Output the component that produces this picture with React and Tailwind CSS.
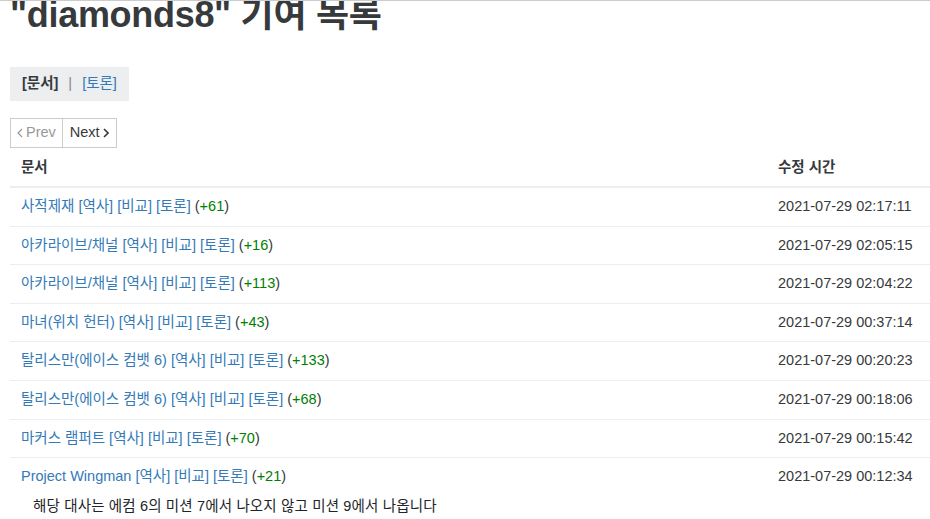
import React from 'react';

const rows = [
  { title: '사적제재', diff: '+61', time: '2021-07-29 02:17:11' },
  { title: '아카라이브/채널', diff: '+16', time: '2021-07-29 02:05:15' },
  { title: '아카라이브/채널', diff: '+113', time: '2021-07-29 02:04:22' },
  { title: '마녀(위치 헌터)', diff: '+43', time: '2021-07-29 00:37:14' },
  { title: '탈리스만(에이스 컴뱃 6)', diff: '+133', time: '2021-07-29 00:20:23' },
  { title: '탈리스만(에이스 컴뱃 6)', diff: '+68', time: '2021-07-29 00:18:06' },
  { title: '마커스 램퍼트', diff: '+70', time: '2021-07-29 00:15:42' },
  {
    title: 'Project Wingman',
    diff: '+21',
    time: '2021-07-29 00:12:34',
    log: '해당 대사는 에컴 6의 미션 7에서 나오지 않고 미션 9에서 나옵니다',
  },
];

const font = { fontFamily: '"Liberation Sans", "Noto Sans CJK KR", Arial, sans-serif' };

const App = () => {
  return (
    <div className="min-h-[519px] bg-white border-t border-[#cccccc] pl-[10px] text-[#373a3c] overflow-hidden" style={font}>
      <h1 className="mt-[-4px] text-[36px] leading-none font-bold text-[#373a3c] tracking-[-0.3px]">
        "diamonds8" 기여 목록
      </h1>

      <div className="mt-[34px] inline-flex items-center h-[34px] px-3 bg-[#eceeef] text-[14.5px]">
        <span className="font-bold">[문서]</span>
        <span className="mx-[10px] text-[#888]">|</span>
        <a className="text-[#337ab7]">[토론]</a>
      </div>

      <div className="mt-[17px] flex text-[14.5px]">
        <span className="flex items-center gap-[3px] h-[30px] px-[6px] border border-[#cccccc] text-[#999]">
          <svg width="6" height="10" viewBox="0 0 6 10" fill="none" stroke="currentColor" strokeWidth="1.2">
            <path d="M5 1 L1 5 L5 9" />
          </svg>
          Prev
        </span>
        <span className="flex items-center gap-[3px] h-[30px] px-[7px] border border-l-0 border-[#cccccc] text-[#373a3c]">
          Next
          <svg width="6" height="10" viewBox="0 0 6 10" fill="none" stroke="currentColor" strokeWidth="1.6">
            <path d="M1 1 L5 5 L1 9" />
          </svg>
        </span>
      </div>

      <table className="w-full border-collapse text-[14.5px]">
        <thead>
          <tr className="border-b-2 border-[#eceeef]">
            <th className="text-left font-bold px-[11px] py-[9px] leading-[20px]">문서</th>
            <th className="text-left font-bold px-3 py-[9px] leading-[20px] w-[164px]">수정 시간</th>
          </tr>
        </thead>
        <tbody>
          {rows.map((r, i) => (
            <React.Fragment key={i}>
              <tr className={r.log ? '' : 'border-b border-[#eceeef]'}>
                <td className="px-[11px] py-[9px] leading-[19.6px]">
                  <a className="text-[#337ab7]">{r.title}</a>{' '}
                  <a className="text-[#337ab7]">[역사]</a>{' '}
                  <a className="text-[#337ab7]">[비교]</a>{' '}
                  <a className="text-[#337ab7]">[토론]</a>{' '}
                  <span>
                    (<span className="text-[#008000]">{r.diff}</span>)
                  </span>
                </td>
                <td className="px-3 py-[9px] leading-[19.6px] whitespace-nowrap">{r.time}</td>
              </tr>
              {r.log && (
                <tr>
                  <td colSpan={2} className="pl-[23px] pt-0 leading-[20px] text-[#212529] tracking-[0.15px]">
                    {r.log}
                  </td>
                </tr>
              )}
            </React.Fragment>
          ))}
        </tbody>
      </table>
    </div>
  );
};

export default App;
